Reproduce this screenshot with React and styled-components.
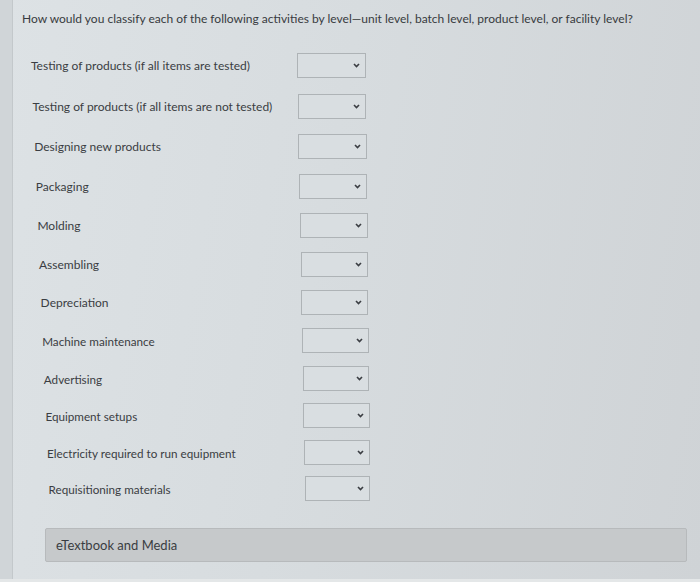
import React from "react";
import styled, { createGlobalStyle } from "styled-components";

const Global = createGlobalStyle`
  html, body { margin: 0; padding: 0; }
  body {
    width: 700px;
    height: 582px;
    overflow: hidden;
    font-family: Lato, "Open Sans", sans-serif;
    background: #d3d8db;
  }
`;

const Screen = styled.div`
  width: 700px;
  height: 582px;
  display: flex;
  background: linear-gradient(100deg, #dde2e5 0%, #d7dcdf 45%, #cfd3d6 100%);
  box-sizing: border-box;
  border-bottom: 3px solid #e4e7e8;
`;

const Gutter = styled.div`
  width: 12px;
  flex: none;
  background: #d0d5d8;
  border-right: 1px solid #c3c8cb;
`;

const Main = styled.div`
  flex: 1;
  display: flex;
  flex-direction: column;
  padding: 11px 14px 0 9px;
`;

const Question = styled.p`
  margin: 0;
  font-size: 12px;
  line-height: 16px;
  color: #383b40;
`;

const List = styled.div`
  display: flex;
  flex-direction: column;
  margin-top: 26px;
`;

const Row = styled.div`
  height: ${(p) => 40.7 - p.$i * 0.45}px;
  display: flex;
  align-items: flex-start;
`;

const Label = styled.span`
  width: 275px;
  flex: none;
  padding-left: ${(p) => 9 + p.$i * 1.6}px;
  padding-top: 6px;
  box-sizing: border-box;
  font-size: ${(p) => (p.$i > 6 ? 11.7 : 12)}px;
  line-height: 14px;
  color: #3a3d42;
  white-space: nowrap;
`;

const Select = styled.div`
  margin-left: ${(p) => p.$i * 0.7}px;
  width: ${(p) => 69 - p.$i * 0.3}px;
  height: 25px;
  box-sizing: border-box;
  border: 1px solid #aeb3b6;
  background: #d9dee1;
  display: flex;
  align-items: center;
  justify-content: flex-end;
  padding-right: 5px;
`;

const Chevron = () => (
  <svg width="7" height="5" viewBox="0 0 7 5">
    <path d="M1 1 L3.5 3.6 L6 1" fill="none" stroke="#3b3e43" strokeWidth="1.6" />
  </svg>
);

const Footer = styled.div`
  margin-top: 16px;
  margin-left: 23px;
  width: 642px;
  height: 34px;
  box-sizing: border-box;
  background: #c6c9cb;
  border: 1px solid #b7babc;
  border-radius: 2px;
  display: flex;
  align-items: center;
  padding-left: 10px;
  font-size: 13px;
  color: #3a3d42;
`;

const items = [
  "Testing of products (if all items are tested)",
  "Testing of products (if all items are not tested)",
  "Designing new products",
  "Packaging",
  "Molding",
  "Assembling",
  "Depreciation",
  "Machine maintenance",
  "Advertising",
  "Equipment setups",
  "Electricity required to run equipment",
  "Requisitioning materials",
];

export default function App() {
  return (
    <>
      <Global />
      <Screen>
        <Gutter />
        <Main>
          <Question>
            How would you classify each of the following activities by level—unit level, batch level, product level, or facility level?
          </Question>
          <List>
            {items.map((t, i) => (
              <Row key={t} $i={i}>
                <Label $i={i}>{t}</Label>
                <Select $i={i}>
                  <Chevron />
                </Select>
              </Row>
            ))}
          </List>
          <Footer>eTextbook and Media</Footer>
        </Main>
      </Screen>
    </>
  );
}
